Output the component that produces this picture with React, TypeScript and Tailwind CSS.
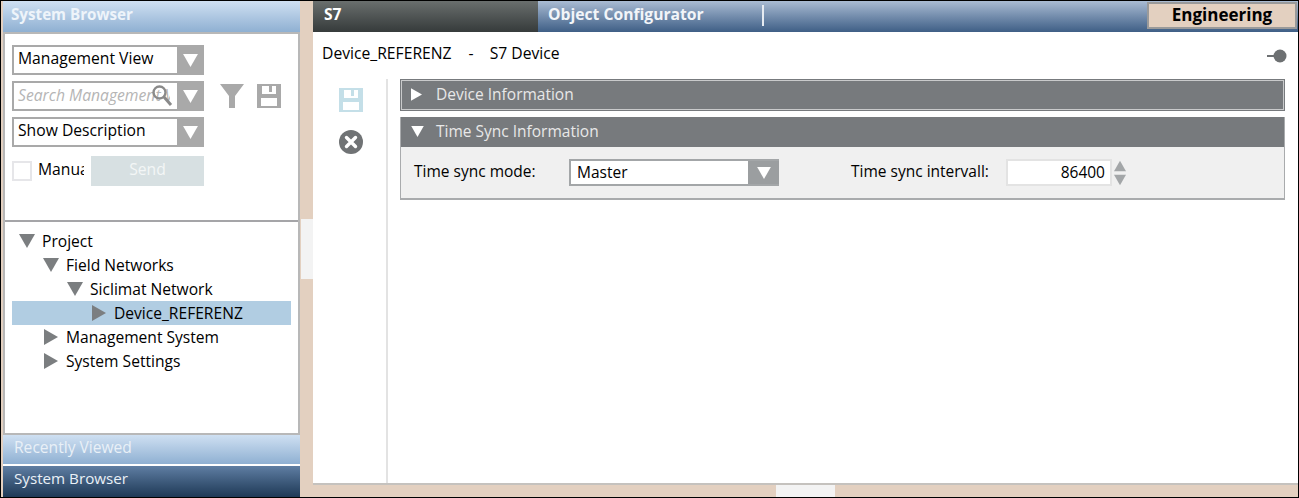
import React from 'react';

const FONT = "font-['Open_Sans',_'Noto_Sans',_sans-serif]";

const Down = ({ className }: { className: string }) => (
  <svg viewBox="0 0 16 14" className={className}>
    <path d="M0 0H16L8 14Z" fill="currentColor" />
  </svg>
);

const Right = ({ className }: { className: string }) => (
  <svg viewBox="0 0 14 16" className={className}>
    <path d="M0 0V16L14 8Z" fill="currentColor" />
  </svg>
);

const SaveIcon = ({ className }: { className: string }) => (
  <svg viewBox="0 0 24 24" className={className}>
    <path
      fillRule="evenodd"
      d="M0 0H24V24H0ZM5 2V10H19V2H15V8H12V2ZM4 14V22H20V14Z"
      fill="currentColor"
    />
  </svg>
);

function Select({ label }: { label: string }) {
  return (
    <div className="flex h-[30px] w-[192px] border-2 border-r-0 border-[#a9a9a9]">
      <div className="flex-1 pl-1 text-[15.7px] leading-[23.5px] text-black">{label}</div>
      <div className="flex w-[27px] items-center justify-center bg-[#a9a9a9] text-white">
        <Down className="h-[13px] w-[15px]" />
      </div>
    </div>
  );
}

function TreeRow({ label, depth, open, selected }: { label: string; depth: number; open?: boolean; selected?: boolean }) {
  const pad = ['pl-[7px]', 'pl-[31px]', 'pl-[55px]', 'pl-[79px]'][depth];
  return (
    <div className={`flex h-6 items-center ${pad} ${selected ? 'bg-[#b1cde2]' : ''}`}>
      <div className="flex w-[23px] shrink-0 text-[#7b7e80]">
        {open ? <Down className="h-[14px] w-4" /> : <Right className="ml-[1px] h-4 w-[14px]" />}
      </div>
      <span className="mt-[1px] text-[15.6px] text-black">{label}</span>
    </div>
  );
}

export default function App() {
  return (
    <div className={`${FONT} flex h-[498px] w-[1299px] overflow-hidden border border-black bg-[#e3d0c0]`}>
      {/* left column */}
      <div className="ml-[2px] flex w-[297px] shrink-0 flex-col">
        <div className="h-[31px] shrink-0 bg-gradient-to-b from-[#cfe0f2] to-[#8fb0d2] pl-2 text-[15.2px] font-bold leading-[26px] text-[#eef4fa]">
          System Browser
        </div>
        <div className="flex h-[403px] shrink-0 flex-col border-2 border-[#b8b8b8] bg-white">
          <div className="h-[188px] shrink-0 border-b-2 border-[#a5a5a8] pl-[7px] pt-[11px]">
            <div className="flex flex-col gap-[6px]">
              <Select label="Management View" />
              <div className="flex items-center">
                <div className="relative flex h-[30px] w-[192px] border-2 border-r-0 border-[#a9a9a9]">
                  <div className="w-[156px] overflow-hidden whitespace-nowrap pl-1 text-[15.7px] italic leading-[24px] text-[#b5b5b5]">
                    Search Management View
                  </div>
                  <div className="ml-auto flex w-[27px] items-center justify-center bg-[#a9a9a9] text-white">
                    <Down className="h-[13px] w-[15px]" />
                  </div>
                  <svg viewBox="0 0 22 24" className="absolute left-[137px] top-[1px] h-6 w-[22px] text-[#8a8a8a]">
                    <circle cx="8.5" cy="8.5" r="6" fill="none" stroke="currentColor" strokeWidth="2.4" />
                    <path d="M13 13L20 21" stroke="currentColor" strokeWidth="3" />
                  </svg>
                </div>
                <svg viewBox="0 0 24 24" className="ml-4 h-6 w-6 text-[#a9a9a9]">
                  <path d="M0 0H24L15 12V24H9V12Z" fill="currentColor" />
                </svg>
                <SaveIcon className="ml-[13px] h-6 w-6 text-[#a9a9a9]" />
              </div>
              <Select label="Show Description" />
            </div>
            <div className="mt-[9px] flex h-[30px] w-[192px] items-center">
              <div className="mb-[1px] h-5 w-5 border-2 border-[#e6e6e9] bg-white" />
              <div className="mb-[3px] ml-[6px] w-[46px] overflow-hidden text-[15.7px] text-black">Manual</div>
              <div className="ml-[7px] flex h-[30px] flex-1 items-center justify-center bg-[#d7e0e2] pb-[3px] text-[15.7px] text-[#f3f6f6]">
                Send
              </div>
            </div>
          </div>
          <div className="flex-1 pl-[7px] pr-[7px] pt-[7px]">
            <TreeRow label="Project" depth={0} open />
            <TreeRow label="Field Networks" depth={1} open />
            <TreeRow label="Siclimat Network" depth={2} open />
            <TreeRow label="Device_REFERENZ" depth={3} selected />
            <TreeRow label="Management System" depth={1} />
            <TreeRow label="System Settings" depth={1} />
          </div>
        </div>
        <div className="h-[29px] shrink-0 bg-gradient-to-b from-[#cfe0f2] to-[#8fb0d2] pl-[11px] text-[15.6px] leading-[25px] text-[#e9f0f7]">
          Recently Viewed
        </div>
        <div className="flex-1 border-t-2 border-white bg-gradient-to-b from-[#5f7ea3] to-[#1f3a57] pl-[11px] text-[15.2px] leading-[25px] text-[#e9f0f7]">
          System Browser
        </div>
      </div>

      {/* splitter */}
      <div className="flex w-[13px] shrink-0 flex-col pl-[1px]">
        <div className="mt-[218px] h-[60px] bg-[#f3f3f3]" />
      </div>

      {/* main column */}
      <div className="flex min-w-0 flex-1 flex-col">
        <div className="flex h-[31px] shrink-0">
          <div className="w-[225px] bg-gradient-to-b from-[#6a6f6e] to-[#363b3b] pl-[11px] text-[15.6px] font-bold leading-[26px] text-white">
            S7
          </div>
          <div className="flex flex-1 items-start bg-gradient-to-b from-[#aabcd3] to-[#3f5f86] pl-[10px]">
            <span className="w-[214px] text-[15.7px] font-bold leading-[26px] text-[#f2f5f9]">Object Configurator</span>
            <div className="mt-1 h-[21px] w-[2px] bg-[#e6ebf1]" />
            <div className="ml-auto mr-[1px] mt-[1px] flex h-[27px] w-[150px] items-center justify-center border-2 border-[#9a9a9a] bg-[#e3d0c0] pb-[2px] text-[17px] font-bold text-black">
              Engineering
            </div>
          </div>
        </div>
        <div className="flex h-[453px] shrink-0 flex-col border-b-2 border-[#c5c2be] bg-white">
          <div className="flex h-[47px] shrink-0 items-center pb-[3px] pl-[9px] pr-[11px] text-[15.7px] text-black">
            <span>Device_REFERENZ</span>
            <span className="ml-[17px]">-</span>
            <span className="ml-[16px]">S7 Device</span>
            <svg viewBox="0 0 20 14" className="ml-auto mt-[3px] h-[14px] w-5 text-[#6d7072]">
              <path d="M0 6H8V8H0Z" fill="currentColor" />
              <circle cx="13" cy="7" r="6.5" fill="currentColor" />
            </svg>
          </div>
          <div className="flex flex-1">
            <div className="w-[75px] shrink-0 border-r-2 border-[#e3e3e3] pl-[26px] pt-[9px]">
              <SaveIcon className="h-6 w-6 text-[#c4dfe8]" />
              <svg viewBox="0 0 24 24" className="mt-[18px] h-6 w-6 text-[#707375]">
                <circle cx="12" cy="12" r="12" fill="currentColor" />
                <path d="M7.5 7.5L16.5 16.5M16.5 7.5L7.5 16.5" stroke="#fff" strokeWidth="3.4" strokeLinecap="round" />
              </svg>
            </div>
            <div className="ml-[12px] flex w-[885px] flex-col gap-[6px]">
              <div className="flex h-[32px] items-center border border-[#777a7d] bg-[#777a7d] pb-[1px] pl-[10px] text-[15.5px] text-[#e8e8e8] shadow-[inset_0_0_0_1px_#c9cacb]">
                <Right className="h-[13px] w-[11px] text-white" />
                <span className="ml-[14px]">Device Information</span>
              </div>
              <div className="border-x border-b-2 border-[#a9abad] bg-[#f0f0f0]">
                <div className="flex h-[30px] items-center bg-[#777a7d] pb-[1px] pl-[10px] text-[15.5px] text-[#e8e8e8]">
                  <Down className="h-[11px] w-[13px] text-white" />
                  <span className="ml-3">Time Sync Information</span>
                </div>
                <div className="flex h-[51px] items-center pl-[13px] text-[15.5px] text-black">
                  <span className="mb-[2px] w-[155px]">Time sync mode:</span>
                  <div className="flex h-[27px] w-[210px] border-2 border-r-0 border-[#a3a6a8] bg-white">
                    <div className="flex-1 pl-[6px] leading-[22px]">Master</div>
                    <div className="flex w-[31px] items-center justify-center bg-[#9b9ea0] text-white">
                      <Down className="h-[12px] w-[14px]" />
                    </div>
                  </div>
                  <span className="mb-[2px] ml-[72px] w-[155px]">Time sync intervall:</span>
                  <div className="h-[27px] w-[106px] border-2 border-[#e3e3e3] bg-white pr-[5px] text-right leading-[22px]">
                    86400
                  </div>
                  <div className="ml-[2px] flex flex-col gap-[2px] text-[#a3a6a8]">
                    <Down className="h-[12px] w-3 rotate-180" />
                    <Down className="h-[12px] w-3" />
                  </div>
                </div>
              </div>
            </div>
          </div>
        </div>
        <div className="flex flex-1 pl-[463px]">
          <div className="h-full w-[59px] bg-[#f3f3f3]" />
        </div>
      </div>
    </div>
  );
}
